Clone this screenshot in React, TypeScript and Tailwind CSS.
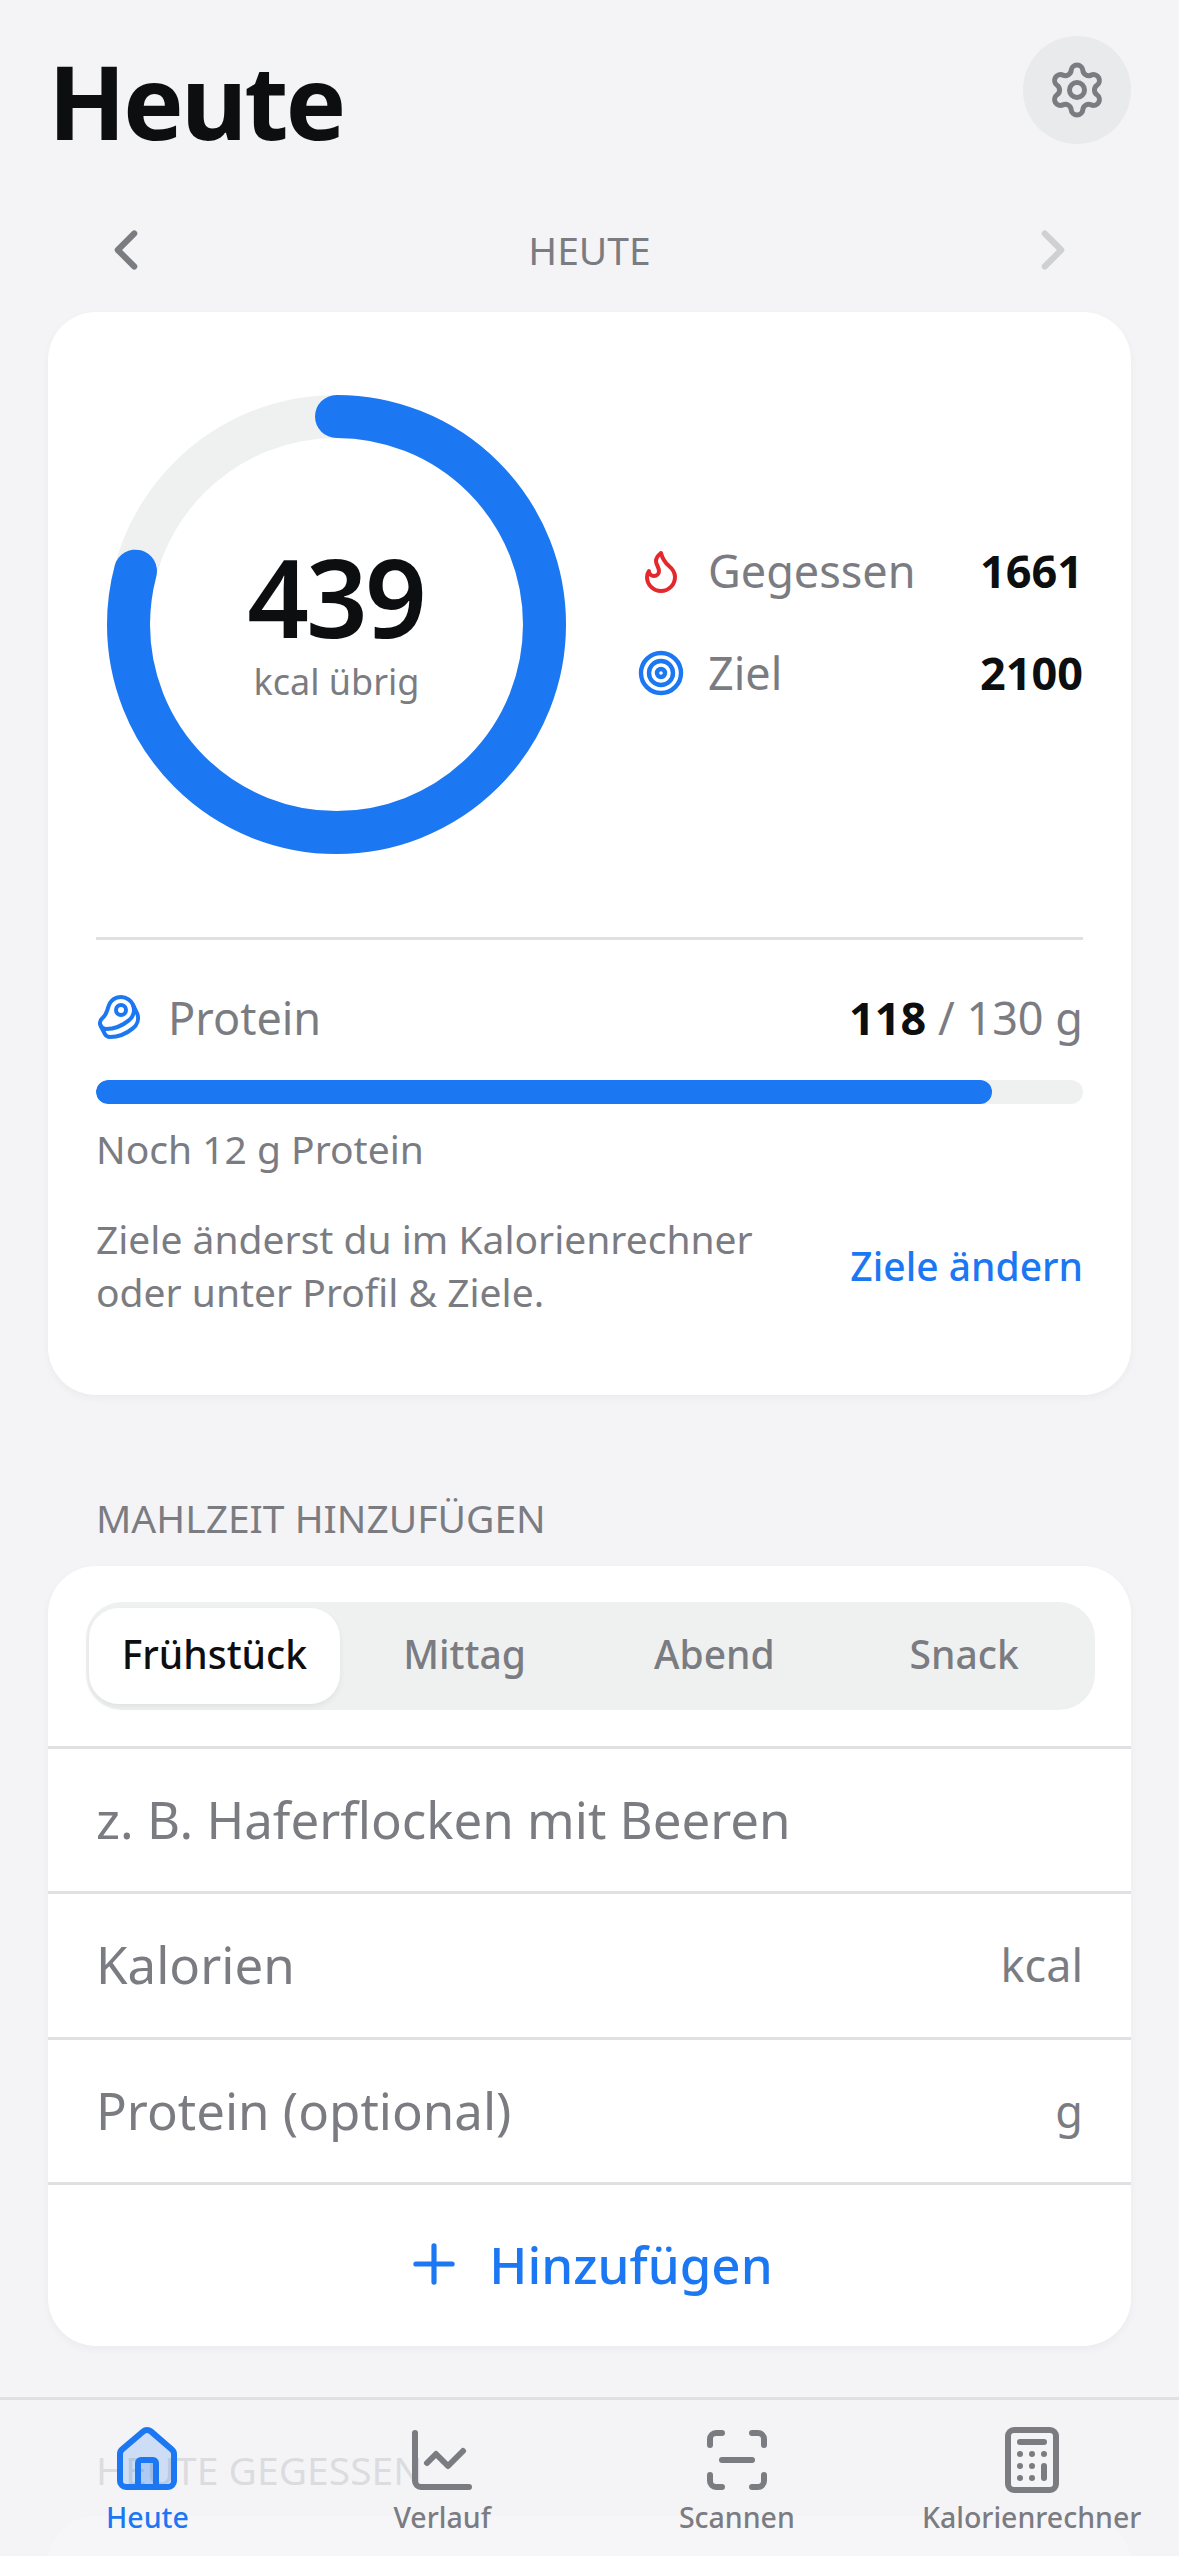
import React from "react";
import { Settings, ChevronLeft, ChevronRight, Flame, Target, Beef, Plus, ChartLine, ScanLine, Calculator } from "lucide-react";

function Stat({ icon, label, value }: { icon: React.ReactNode; label: string; value: string }) {
  return (
    <div className="flex items-center h-[102px]">
      <div className="w-[48px] flex justify-center">{icon}</div>
      <span className="ml-[23px] text-[45px] leading-none text-[#7b7c82]">{label}</span>
      <span className="ml-auto text-[45px] leading-none font-bold text-[#0c0e10]">{value}</span>
    </div>
  );
}

function Row({ label, unit, tall }: { label: string; unit?: string; tall?: boolean }) {
  return (
    <div className={`${tall ? "h-[146px]" : "h-[145px]"} flex items-center justify-between pl-[48px] pr-[48px] pb-[2px] border-b-[3px] border-[#dfe0e2]`}>
      <span className="text-[51px] text-[#7b7c82] leading-none">{label}</span>
      {unit && <span className="text-[45px] text-[#7b7c82] leading-none">{unit}</span>}
    </div>
  );
}

function Tab({ icon, label, active }: { icon: React.ReactNode; label: string; active?: boolean }) {
  return (
    <div className={`flex flex-col items-center ${active ? "text-[#1c77f2]" : "text-[#7b7c82]"}`}>
      {icon}
      <span className="mt-[1px] text-[28.5px] leading-[40px] font-medium whitespace-nowrap">{label}</span>
    </div>
  );
}

export default function App() {
  const r = 208;
  const c = 2 * Math.PI * r;
  return (
    <div className="relative w-[1179px] h-[2556px] overflow-hidden bg-[#f4f4f6] font-['Noto_Sans',sans-serif]">
      <div className="px-[48px] pt-[36px]">
        <div className="flex items-start justify-between">
          <h1 className="text-[102px] leading-[136px] font-bold tracking-[-3px] text-[#0c0e10] mt-[-3px]">Heute</h1>
          <div className="w-[108px] h-[108px] rounded-full bg-[#e9eaec] flex items-center justify-center">
            <Settings size={60} strokeWidth={2} className="text-[#7b7c82]" />
          </div>
        </div>
        <div className="flex items-center justify-between h-[66px] mt-[48px] px-[45px]">
          <ChevronLeft size={66} strokeWidth={2.2} className="text-[#7b7c82]" />
          <span className="text-[39px] leading-none text-[#7b7c82] pb-[2px]">HEUTE</span>
          <ChevronRight size={66} strokeWidth={2.2} className="text-[#cfd0d3]" />
        </div>

        <div className="mt-[29px] bg-white rounded-[48px] w-[1083px] h-[1083px] px-[48px] shadow-[0_3px_9px_rgba(0,0,0,0.04)]">
          <div className="flex items-center pt-[83px]">
            <div className="relative w-[459px] h-[459px] ml-[11px] shrink-0">
              <svg width="459" height="459" viewBox="0 0 459 459">
                <circle cx="229.5" cy="229.5" r={r} fill="none" stroke="#eff1f1" strokeWidth="43" />
                <circle
                  cx="229.5"
                  cy="229.5"
                  r={r}
                  fill="none"
                  stroke="#1c77f2"
                  strokeWidth="43"
                  strokeLinecap="round"
                  strokeDasharray={`${c * 0.791} ${c}`}
                  transform="rotate(-90 229.5 229.5)"
                />
              </svg>
              <div className="absolute inset-0 flex flex-col items-center justify-center">
                <span className="text-[108px] leading-[108px] font-semibold text-[#0c0e10] tracking-[-3px] pr-[2px] mt-[-2px]">439</span>
                <span className="text-[36px] leading-[45px] text-[#7b7c82] mt-[8px]">kcal übrig</span>
              </div>
            </div>
            <div className="flex-1 ml-[71px] mb-[6px]">
              <Stat icon={<Flame size={48} strokeWidth={2} className="text-[#e5282c]" />} label="Gegessen" value="1661" />
              <Stat icon={<Target size={50} strokeWidth={2.2} className="text-[#1c77f2]" />} label="Ziel" value="2100" />
            </div>
          </div>
          <div className="mt-[83px] border-t-[3px] border-[#dfe0e2]" />
          <div className="flex items-center h-[48px] mt-[53px]">
            <Beef size={48} strokeWidth={2} className="text-[#1c77f2]" />
            <span className="ml-[24px] text-[45px] leading-none text-[#7b7c82]">Protein</span>
            <span className="ml-auto text-[45px] leading-none text-[#7b7c82]">
              <span className="font-bold text-[#0c0e10]">118</span> / 130 g
            </span>
          </div>
          <div className="mt-[39px] h-[24px] rounded-full bg-[#eff1f1] overflow-hidden">
            <div className="h-full rounded-full bg-[#1c77f2]" style={{ width: `${(118 / 130) * 100}%` }} />
          </div>
          <p className="mt-[21px] text-[39px] leading-[47px] text-[#7b7c82]">Noch 12 g Protein</p>
          <div className="mt-[40px] flex items-center justify-between">
            <p className="text-[39px] leading-[53px] text-[#7b7c82]">
              Ziele änderst du im Kalorienrechner
              <br />
              oder unter Profil &amp; Ziele.
            </p>
            <span className="text-[39px] leading-none font-medium text-[#1c77f2]">Ziele ändern</span>
          </div>
        </div>

        <p className="mt-[103px] ml-[48px] text-[39px] leading-[40px] text-[#7b7c82]">MAHLZEIT HINZUFÜGEN</p>

        <div className="mt-[28px] bg-white rounded-[48px] w-[1083px] overflow-hidden shadow-[0_3px_9px_rgba(0,0,0,0.04)]">
          <div className="h-[183px] pt-[36px] pl-[38px] pr-[36px] border-b-[3px] border-[#dfe0e2]">
            <div className="h-[108px] rounded-[36px] bg-[#eff1f1] p-[6px] pl-[3px] flex">
              <div className="w-[251px] pb-[3px] rounded-[30px] bg-white shadow-[0_3px_6px_rgba(0,0,0,0.06)] flex items-center justify-center text-[39px] font-medium text-[#0c0e10]">Frühstück</div>
              <div className="w-[250px] pb-[3px] flex items-center justify-center text-[39px] font-medium text-[#7b7c82]">Mittag</div>
              <div className="w-[250px] pb-[3px] flex items-center justify-center text-[39px] font-medium text-[#7b7c82]">Abend</div>
              <div className="w-[250px] pb-[3px] flex items-center justify-center text-[39px] font-medium text-[#7b7c82]">Snack</div>
            </div>
          </div>
          <Row label="z. B. Haferflocken mit Beeren" />
          <Row label="Kalorien" unit="kcal" tall />
          <Row label="Protein (optional)" unit="g" />
          <div className="h-[161px] flex items-center justify-center pb-[3px] pr-[3px] text-[#1c77f2]">
            <Plus size={62} strokeWidth={2} />
            <span className="ml-[24px] text-[51px] leading-none font-medium">Hinzufügen</span>
          </div>
        </div>

        <p className="mt-[104px] ml-[48px] text-[39px] leading-[40px] text-[#7b7c82]">HEUTE GEGESSEN</p>
        <div className="mt-[26px] bg-white rounded-[48px] w-[1083px] h-[300px]" />
      </div>

      <nav className="absolute left-0 right-0 bottom-0 h-[159px] bg-[#f4f4f6]/80 border-t-[3px] border-[#dfe0e2] grid grid-cols-4 pt-[24px]">
        <Tab
          active
          label="Heute"
          icon={
            <svg width="72" height="72" viewBox="0 0 24 24" fill="none" stroke="currentColor" strokeWidth="2" strokeLinecap="round" strokeLinejoin="round">
              <path d="M3 10a2 2 0 0 1 .709-1.528l7-6a2 2 0 0 1 2.582 0l7 6A2 2 0 0 1 21 10v9a2 2 0 0 1-2 2H5a2 2 0 0 1-2-2z" fill="currentColor" fillOpacity="0.18" />
              <path d="M15 21v-8a1 1 0 0 0-1-1h-4a1 1 0 0 0-1 1v8" fill="currentColor" fillOpacity="0.18" />
            </svg>
          }
        />
        <Tab label="Verlauf" icon={<ChartLine size={72} strokeWidth={2} />} />
        <Tab label="Scannen" icon={<ScanLine size={72} strokeWidth={2} />} />
        <Tab label="Kalorienrechner" icon={<Calculator size={72} strokeWidth={2} />} />
      </nav>
    </div>
  );
}
